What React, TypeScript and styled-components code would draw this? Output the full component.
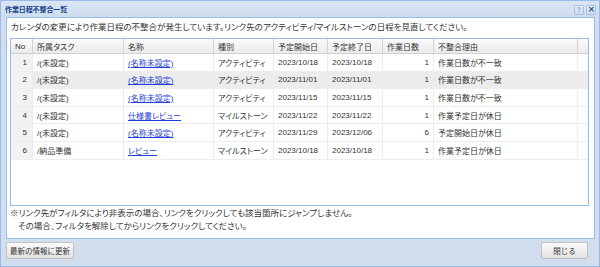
import React from 'react';
import styled, { createGlobalStyle } from 'styled-components';

const GlobalStyle = createGlobalStyle`
  html, body {
    margin: 0;
    padding: 0;
    background: #ffffff;
  }
  body {
    font-family: "Liberation Sans", "Noto Sans CJK JP", sans-serif;
    color: #333;
  }
  * {
    box-sizing: border-box;
  }
`;

type Row = {
  no: number;
  task: string;
  name: string;
  kind: string;
  start: string;
  end: string;
  days: number;
  reason: string;
};

const rows: Row[] = [
  { no: 1, task: '/(未設定)', name: '(名称未設定)', kind: 'アクティビティ', start: '2023/10/18', end: '2023/10/18', days: 1, reason: '作業日数が不一致' },
  { no: 2, task: '/(未設定)', name: '(名称未設定)', kind: 'アクティビティ', start: '2023/11/01', end: '2023/11/01', days: 1, reason: '作業日数が不一致' },
  { no: 3, task: '/(未設定)', name: '(名称未設定)', kind: 'アクティビティ', start: '2023/11/15', end: '2023/11/15', days: 1, reason: '作業日数が不一致' },
  { no: 4, task: '/(未設定)', name: '仕様書レビュー', kind: 'マイルストーン', start: '2023/11/22', end: '2023/11/22', days: 1, reason: '作業予定日が休日' },
  { no: 5, task: '/(未設定)', name: '(名称未設定)', kind: 'アクティビティ', start: '2023/11/29', end: '2023/12/06', days: 6, reason: '予定開始日が休日' },
  { no: 6, task: '/納品準備', name: 'レビュー', kind: 'マイルストーン', start: '2023/10/18', end: '2023/10/18', days: 1, reason: '作業予定日が休日' },
];

const COLS = '22px 91px 90px 60px 54px 55px 51px 144px 9px';
const BODY_COLS = '22px 91px 90px 60px 54px 55px 51px 144px';

export default function App() {
  return (
    <>
      <GlobalStyle />
      <Window>
        <TitleBar>
          <Title>作業日程不整合一覧</Title>
          <Tools>
            <ToolBtn>?</ToolBtn>
            <ToolBtn $strong>✕</ToolBtn>
          </Tools>
        </TitleBar>
        <Panel>
          <Message>
            カレンダの変更により作業日程の不整合が発生しています。リンク先のアクティビティ/マイルストーンの日程を見直してください。
          </Message>
          <Grid>
            <HeaderRow>
              <HeadCell>No</HeadCell>
              <HeadCell>所属タスク</HeadCell>
              <HeadCell>名称</HeadCell>
              <HeadCell>種別</HeadCell>
              <HeadCell>予定開始日</HeadCell>
              <HeadCell>予定終了日</HeadCell>
              <HeadCell>作業日数</HeadCell>
              <HeadCell>不整合理由</HeadCell>
              <HeadCell />
            </HeaderRow>
            {rows.map((r) => (
              <BodyRow key={r.no} $selected={r.no === 2}>
                <NumCell>{r.no}</NumCell>
                <Cell>{r.task}</Cell>
                <Cell>
                  <NameLink href="#">{r.name}</NameLink>
                </Cell>
                <Cell>{r.kind}</Cell>
                <Cell>{r.start}</Cell>
                <Cell>{r.end}</Cell>
                <Cell $right>{r.days}</Cell>
                <Cell>{r.reason}</Cell>
              </BodyRow>
            ))}
          </Grid>
          <Note>
            <div>※リンク先がフィルタにより非表示の場合、リンクをクリックしても該当箇所にジャンプしません。</div>
            <NoteIndent>その場合、フィルタを解除してからリンクをクリックしてください。</NoteIndent>
          </Note>
        </Panel>
        <Footer>
          <Button>最新の情報に更新</Button>
          <Button $wide>閉じる</Button>
        </Footer>
      </Window>
    </>
  );
}

const Window = styled.div`
  width: 600px;
  height: 267px;
  border: 1px solid #99bbe8;
  background: #d2deee;
  display: flex;
  flex-direction: column;
`;

const TitleBar = styled.div`
  height: 16px;
  display: flex;
  align-items: center;
  justify-content: space-between;
  padding: 0 3px 0 4px;
  background: linear-gradient(#dae6f4, #cfdcee);
`;

const Title = styled.div`
  font-size: 7px;
  font-weight: bold;
  color: #15428b;
  letter-spacing: -0.1px;
`;

const Tools = styled.div`
  display: flex;
  gap: 2px;
  margin-top: 1px;
`;

const ToolBtn = styled.div<{ $strong?: boolean }>`
  width: 10px;
  height: 10px;
  display: flex;
  align-items: center;
  justify-content: center;
  font-size: ${(p) => (p.$strong ? '8px' : '7px')};
  font-weight: bold;
  line-height: 1;
  color: ${(p) => (p.$strong ? '#2f5a9a' : '#8aa3c4')};
  background: linear-gradient(#eaf1fa, #c9d9ee);
  border: 1px solid #a9c2e2;
  border-radius: 1px;
`;

const Panel = styled.div`
  flex: 1;
  margin: 0 4px 0 5px;
  background: #ffffff;
  border: 1px solid #99bbe8;
  padding: 2px 5px 0 3px;
  display: flex;
  flex-direction: column;
`;

const Message = styled.div`
  font-size: 8.5px;
  line-height: 15px;
  padding-left: 1px;
  white-space: nowrap;
  font-feature-settings: 'palt';
`;

const Grid = styled.div`
  margin-top: 3px;
  height: 168px;
  border: 1px solid #99bbe8;
  font-size: 8px;
  font-feature-settings: 'palt';
`;

const HeaderRow = styled.div`
  display: grid;
  grid-template-columns: ${COLS};
  height: 15px;
  background: linear-gradient(#fbfbfb, #ebebeb);
  border-bottom: 1px solid #d0d0d0;
`;

const HeadCell = styled.div`
  display: flex;
  align-items: center;
  padding-left: 4px;
  border-right: 1px solid #d3d3d3;
  white-space: nowrap;
  overflow: hidden;
  color: #333;
  &:last-child {
    border-right: none;
  }
`;

const BodyRow = styled.div<{ $selected?: boolean }>`
  display: grid;
  grid-template-columns: ${BODY_COLS};
  height: 17.6px;
  background: ${(p) => (p.$selected ? '#ececec' : '#ffffff')};
  border-bottom: 1px solid #ededed;
`;

const Cell = styled.div<{ $right?: boolean }>`
  display: flex;
  align-items: center;
  justify-content: ${(p) => (p.$right ? 'flex-end' : 'flex-start')};
  padding: 0 4px;
  border-right: 1px solid #ededed;
  white-space: nowrap;
  overflow: hidden;
  color: #333;
`;

const NumCell = styled(Cell)`
  justify-content: flex-end;
  background: #f2f2f2;
  padding-right: 5px;
`;

const NameLink = styled.a`
  color: #1f3fd6;
  text-decoration: underline;
`;

const Note = styled.div`
  font-size: 8.5px;
  line-height: 13px;
  padding-top: 1px;
  white-space: nowrap;
  font-feature-settings: 'palt';
`;

const NoteIndent = styled.div`
  padding-left: 8px;
`;

const Footer = styled.div`
  height: 27px;
  display: flex;
  align-items: flex-start;
  justify-content: space-between;
  padding: 3px 11px 0 5px;
`;

const Button = styled.button<{ $wide?: boolean }>`
  height: 17px;
  min-width: ${(p) => (p.$wide ? '47px' : '0')};
  padding: 0 3px;
  font-family: "Liberation Sans", "Noto Sans CJK JP", sans-serif;
  font-size: 7.5px;
  color: #333;
  background: linear-gradient(#fbfbfb, #e2e2e2);
  border: 1px solid #c2c2c2;
  border-radius: 2px;
  white-space: nowrap;
`;
